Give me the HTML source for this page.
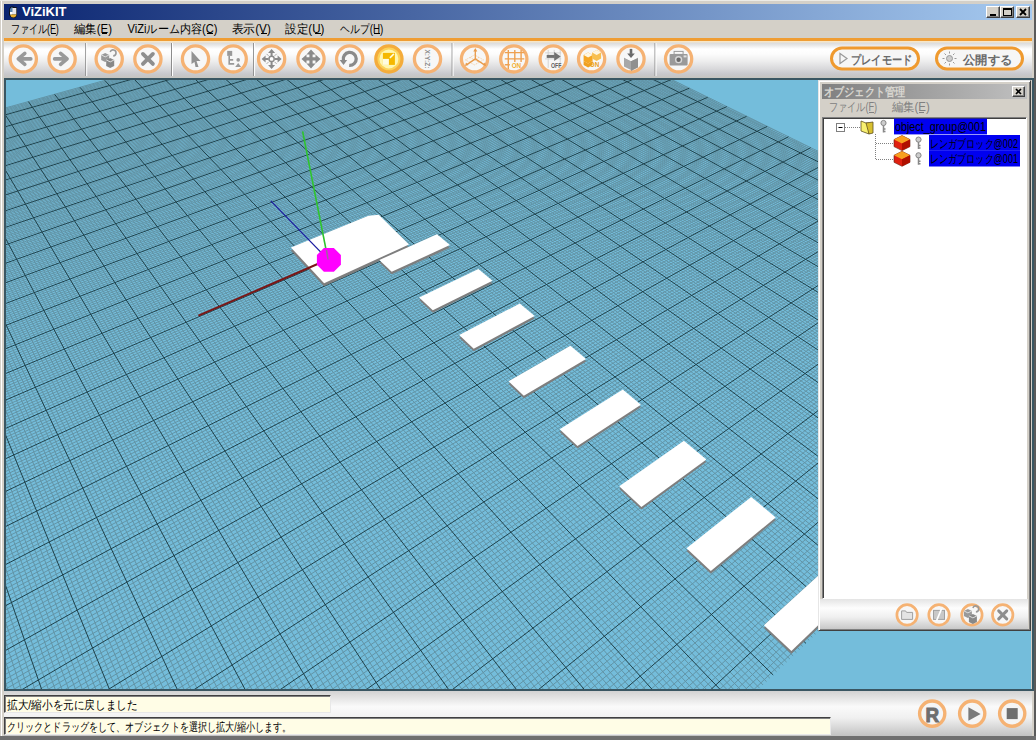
<!DOCTYPE html>
<html><head><meta charset="utf-8"><style>
*{margin:0;padding:0;box-sizing:border-box}
html,body{width:1036px;height:740px;overflow:hidden;background:#d4d0c8;font-family:"Liberation Sans",sans-serif;position:relative}
.a{position:absolute}
svg{font-family:"Liberation Sans",sans-serif}
#title{left:4px;top:4px;width:1028px;height:16px;background:linear-gradient(to right,#0a2470 0%,#a6caf0 100%)}
.wb{top:6px;width:14px;height:12px;background:#d4d0c8;border:1px solid;border-color:#fff #404040 #404040 #fff;box-shadow:inset -1px -1px #808080}
#orange{left:4px;top:38px;width:1028px;height:3px;background:#ef9d34}
#tool{left:4px;top:41px;width:1028px;height:37px;background:linear-gradient(to bottom,#f6e6c8 0px,#f6e6c8 1px,#dcdcdc 2px,#e6e6e6 4px,#ffffff 8px,#fcfcfc 13px,#eeeeee 20px,#d8d8da 28px,#c8c8cc 33px,#c6c4be 37px)}
#vpb{left:4px;top:78px;width:1030px;height:613px;border:2px solid #3a5662}
#status{left:4px;top:691px;width:1028px;height:45px;background:linear-gradient(to bottom,#d2d2d2 0%,#fafafa 35%,#f0f0f0 60%,#c2c2c2 100%)}
.sb{background:#fffde6;border:1px solid;border-color:#404040 #e8e8e8 #e8e8e8 #404040;box-shadow:inset 1px 1px #808080}
#bottom{left:0;top:736px;width:1036px;height:4px;background:#6f6f6f}
#panel{left:818px;top:80px;width:213px;height:551px;background:#d4d0c8;border:1px solid;border-color:#e6e6e6 #404040 #404040 #e6e6e6;box-shadow:inset 1px 1px #fff,inset -1px -1px #808080}
#ptitle{left:822px;top:84px;width:205px;height:15px;background:linear-gradient(to right,#808080,#c0c0c0)}
#tree{left:822px;top:117px;width:205px;height:482px;background:#fff;border:1px solid;border-color:#808080 #fff #fff #808080;box-shadow:inset 1px 1px #404040}
#ptool{left:820px;top:599px;width:208px;height:30px;background:linear-gradient(to bottom,#e4e4e4 0%,#fdfdfd 30%,#f0f0f0 60%,#c8c8c8 100%)}
</style></head>
<body>
<div class="a" style="left:0;top:0;width:1036px;height:1px;background:#ecebe6"></div>
<div class="a" style="left:1px;top:1px;width:1px;height:736px;background:#fff"></div>
<div class="a" style="left:1034px;top:0;width:2px;height:740px;background:#5a5a5a"></div>
<div class="a" id="title"></div>
<svg class="a" style="left:0;top:0" width="80" height="20"><path d="M9.5 8.5Q10 6 12.5 6.5L17 7.5V14.5Q16.5 18 13.5 18Q9.5 17.5 9 14z" fill="#101010"/><path d="M12 8h4.3v6.5h-4.3z" fill="#e8e8ec"/><path d="M10 9q1-2 2.5-2v5h-2.5z" fill="#5a86b0"/><path d="M10 14.5h6.5q-0.5 3-3.2 3-2.8-0.2-3.3-3z" fill="#e8b030"/><path d="M10 12h2v2.5h-2z" fill="#fff"/><text x="22" y="16" textLength="44.5" lengthAdjust="spacingAndGlyphs" font-size="12" fill="#fff" font-weight="bold" >ViZiKIT</text></svg>
<div class="a wb" style="left:986px"><div class="a" style="left:3px;top:7px;width:6px;height:2px;background:#000"></div></div>
<div class="a wb" style="left:1000px"><div class="a" style="left:2px;top:1px;width:9px;height:8px;border:1px solid #000;border-top-width:2px"></div></div>
<div class="a wb" style="left:1016px"><svg class="a" style="left:2px;top:1px" width="9" height="8"><path d="M1 1l6 6M7 1l-6 6" stroke="#000" stroke-width="1.8"/></svg></div>
<svg class="a" style="left:0;top:0" width="1036" height="40"><text x="10.7" y="32.5" textLength="48" lengthAdjust="spacingAndGlyphs" font-size="12" fill="#000" font-weight="normal" >ファイル(F)</text><rect x="51" y="33" width="5" height="1" fill="#000"/><text x="74" y="32.5" textLength="38" lengthAdjust="spacingAndGlyphs" font-size="12" fill="#000" font-weight="normal" >編集(E)</text><rect x="102" y="33" width="5" height="1" fill="#000"/><text x="127.5" y="32.5" textLength="90" lengthAdjust="spacingAndGlyphs" font-size="12" fill="#000" font-weight="normal" >ViZiルーム内容(C)</text><rect x="207" y="33" width="6" height="1" fill="#000"/><text x="231.8" y="32.5" textLength="39" lengthAdjust="spacingAndGlyphs" font-size="12" fill="#000" font-weight="normal" >表示(V)</text><rect x="261" y="33" width="6" height="1" fill="#000"/><text x="285.3" y="32.5" textLength="39" lengthAdjust="spacingAndGlyphs" font-size="12" fill="#000" font-weight="normal" >設定(U)</text><rect x="315" y="33" width="6" height="1" fill="#000"/><text x="340.4" y="32.5" textLength="43" lengthAdjust="spacingAndGlyphs" font-size="12" fill="#000" font-weight="normal" >ヘルプ(H)</text><rect x="374" y="33" width="6" height="1" fill="#000"/></svg>
<div class="a" id="orange"></div>
<div class="a" id="tool"></div>
<svg class="a" style="left:0;top:0" width="1036" height="80"><circle cx="23.3" cy="58.9" r="13.1" fill="#f7f7f7" stroke="#f5b273" stroke-width="3.3"/><path d="M30.8 58.9H20.3M24.8 53.4L18.3 58.9L24.8 64.4" stroke="#999" stroke-width="3.6" fill="none" stroke-linecap="round" stroke-linejoin="round"/><circle cx="62.1" cy="58.9" r="13.1" fill="#f7f7f7" stroke="#f5b273" stroke-width="3.3"/><path d="M54.6 58.9H65.1M60.6 53.4L67.1 58.9L60.6 64.4" stroke="#999" stroke-width="3.6" fill="none" stroke-linecap="round" stroke-linejoin="round"/><circle cx="109.2" cy="58.9" r="13.1" fill="#f7f7f7" stroke="#f5b273" stroke-width="3.3"/><path d="M101.2 54.9l4-2 4 2v5l-4 2-4-2z" fill="#999"/><path d="M101.2 54.9l4 2 4-2" stroke="#ddd" fill="none"/><path d="M106.2 59.9l4-2 4 2v6l-4 2-4-2z" fill="#888"/><path d="M106.2 59.9l4 2 4-2" stroke="#ddd" fill="none"/><path d="M110.2 51.9a3 3 0 1 1 3 4" stroke="#999" stroke-width="1.6" fill="none"/><circle cx="147.9" cy="58.9" r="13.1" fill="#f7f7f7" stroke="#f5b273" stroke-width="3.3"/><path d="M142.9 53.9L152.9 63.9M152.9 53.9L142.9 63.9" stroke="#8e8e8e" stroke-width="3.8" stroke-linecap="round"/><circle cx="195.5" cy="58.9" r="13.1" fill="#f7f7f7" stroke="#f5b273" stroke-width="3.3"/><path d="M191.5 50.9L200.5 60.9L196.5 60.9L198.5 66.9L195.5 66.9L194.5 61.9L191.5 63.9z" fill="#929292"/><circle cx="233.2" cy="58.9" r="13.1" fill="#f7f7f7" stroke="#f5b273" stroke-width="3.3"/><path d="M227.2 50.9h5v5h-5z" fill="#999"/><path d="M229.2 55.9v8h5M229.2 59.9h4" stroke="#999" stroke-width="1.6" fill="none"/><circle cx="238.2" cy="59.9" r="1.8" fill="#999"/><path d="M238.2 62.9l3 4h-6z" fill="#999"/><circle cx="271.6" cy="58.9" r="13.1" fill="#f7f7f7" stroke="#f5b273" stroke-width="3.3"/><path d="M263.6 58.9H268.6M274.6 58.9H279.6M271.6 50.9V55.9M271.6 61.9V66.9" stroke="#8a8a8a" stroke-width="2"/><circle cx="271.6" cy="58.9" r="2.6" fill="#fff" stroke="#8a8a8a" stroke-width="1.4"/><path d="M261.6 58.9l4-3.5v7zM281.6 58.9l-4-3.5v7zM271.6 48.9l-3.5 4h7zM271.6 68.9l-3.5-4h7z" fill="#8a8a8a"/><path d="M266.6 53.9l2 2M276.6 53.9l-2 2M266.6 63.9l2-2M276.6 63.9l-2-2" stroke="#aaa" stroke-width="1"/><circle cx="311" cy="58.9" r="13.1" fill="#f7f7f7" stroke="#f5b273" stroke-width="3.3"/><path d="M305 58.9H317M311 52.9V64.9" stroke="#8a8a8a" stroke-width="3.2"/><path d="M301.5 58.9l5-4.5v9zM320.5 58.9l-5-4.5v9zM311 49.4l-4.5 5h9zM311 68.4l-4.5-5h9z" fill="#8a8a8a"/><circle cx="349.7" cy="58.9" r="13.1" fill="#f7f7f7" stroke="#f5b273" stroke-width="3.3"/><path d="M343.4 60.4A6.5 6.5 0 1 1 349.2 65.4" stroke="#8a8a8a" stroke-width="3.3" fill="none"/><path d="M339.7 59.9h7.5l-3.7 5z" fill="#8a8a8a"/><circle cx="388.9" cy="58.9" r="13.1" fill="#fbd35a" stroke="#f4ac3c" stroke-width="3.3"/><circle cx="388.9" cy="58.9" r="9.5" fill="#fff6b0"/><rect x="382.9" y="52.9" width="12" height="12" fill="#f5b800"/><rect x="382.9" y="58.9" width="6" height="6" fill="#fffce0"/><path d="M389.9 57.9l4-4" stroke="#fffce0" stroke-width="1.5"/><circle cx="427.5" cy="58.9" r="13.1" fill="#f7f7f7" stroke="#f5b273" stroke-width="3.3"/><g transform="translate(425.3 58.9) rotate(90)"><text x="0" y="0" font-size="6.5" font-weight="bold" fill="#8a8a8a" text-anchor="middle" textLength="19" lengthAdjust="spacingAndGlyphs">X:Y:Z:</text></g><circle cx="474.5" cy="58.9" r="13.1" fill="#f7f7f7" stroke="#f5b273" stroke-width="3.3"/><path d="M465.5 59.9l9-5 9 5-9 5z M470.0 57.4l9 5M479.0 57.4l-9 5" stroke="#f4c898" stroke-width="0.8" fill="none" stroke-dasharray="1.2 0.8"/><path d="M475.3 58.9V49.9M475.3 58.9L466.5 64.9M475.3 58.9L484.5 64.9" stroke="#e89a4a" stroke-width="1.3" fill="none"/><path d="M475.3 47.9l-2 3.5h4z M465.0 65.9l1-3.5 2.5 2.5z M486.0 65.9l-1-3.5-2.5 2.5z" fill="#e89a4a"/><circle cx="513.8" cy="58.9" r="13.1" fill="#f7f7f7" stroke="#f5b273" stroke-width="3.3"/><path d="M504.79999999999995 52.6h19.5M504.79999999999995 58.9h19.5M504.79999999999995 64.7h5M508.29999999999995 49.9v19M514.8 49.9v12M521.0999999999999 49.9v12" stroke="#eea050" stroke-width="1.4"/><text x="516.4" y="67.9" font-size="7" font-weight="bold" fill="#f2b030" text-anchor="middle" textLength="9.5" lengthAdjust="spacingAndGlyphs">ON</text><circle cx="553.2" cy="58.9" r="13.1" fill="#f7f7f7" stroke="#f5b273" stroke-width="3.3"/><path d="M545.2 52.9h16M545.2 58.9h16M548.2 49.9v18M554.2 49.9v9M560.2 49.9v18" stroke="#cfcfcf" stroke-width="0.9"/><path d="M546.7 56.4h8" stroke="#707070" stroke-width="3"/><path d="M554.2 51.9l6.5 4.5-6.5 4.5z" fill="#707070"/><text x="556.2" y="67.9" font-size="7" font-weight="bold" fill="#606060" text-anchor="middle" textLength="10.5" lengthAdjust="spacingAndGlyphs">OFF</text><circle cx="591.6" cy="58.9" r="13.1" fill="#f7f7f7" stroke="#f5b273" stroke-width="3.3"/><path d="M583.6 54.9l4.5-2.5 4.5 2.5v6l-4.5 2.5-4.5-2.5z" fill="#f5a623"/><path d="M583.6 54.9l4.5 2.5 4.5-2.5-4.5-2.5z" fill="#fff6e0"/><path d="M592.1 52.4l4.5-2.5 4.5 2.5v6l-4.5 2.5-4.5-2.5z" fill="#f8c050"/><path d="M592.1 52.4l4.5 2.5 4.5-2.5-4.5-2.5z" fill="#fff6e0"/><path d="M583.6 60.9l4.5 2.5 4.5-2.5v4l-4.5 2.5-4.5-2.5z" fill="#f0a020"/><text x="594.6" y="67.4" font-size="7" font-weight="bold" fill="#eaa020" text-anchor="middle" textLength="9.5" lengthAdjust="spacingAndGlyphs">ON</text><circle cx="631" cy="58.9" r="13.1" fill="#f7f7f7" stroke="#f5b273" stroke-width="3.3"/><path d="M624 57.4l7 3.5 7-3.5v9l-7 3.5-7-3.5z" fill="#a8a8a8"/><path d="M631 60.9v10l7-3.5v-9z" fill="#909090"/><path d="M624 57.4l7 3.5 7-3.5-7-3.5z" fill="#fafafa"/><path d="M631 48.9v5" stroke="#6a6a6a" stroke-width="2.6"/><path d="M627.2 53.4h7.6l-3.8 4.5z" fill="#6a6a6a"/><circle cx="678.6" cy="58.9" r="13.1" fill="#f7f7f7" stroke="#f5b273" stroke-width="3.3"/><rect x="669.6" y="53.9" width="18" height="11.5" rx="1" fill="#9a9a9a"/><rect x="674.1" y="51.4" width="9" height="3" fill="none" stroke="#9a9a9a" stroke-width="1"/><rect x="683.6" y="55.4" width="3" height="2" fill="#e0e0e0"/><circle cx="678.6" cy="59.699999999999996" r="3.6" fill="#d8d8d8"/><circle cx="678.6" cy="59.699999999999996" r="2.2" fill="#6a6a6a"/><rect x="85.2" y="43" width="1" height="33" fill="#8c8c8c"/><rect x="86.2" y="43" width="1" height="33" fill="#fff"/><rect x="171.0" y="43" width="1" height="33" fill="#8c8c8c"/><rect x="172.0" y="43" width="1" height="33" fill="#fff"/><rect x="253.1" y="43" width="1" height="33" fill="#8c8c8c"/><rect x="254.1" y="43" width="1" height="33" fill="#fff"/><rect x="451.6" y="43" width="1" height="33" fill="#8c8c8c"/><rect x="452.6" y="43" width="1" height="33" fill="#fff"/><rect x="654.5" y="43" width="1" height="33" fill="#8c8c8c"/><rect x="655.5" y="43" width="1" height="33" fill="#fff"/><rect x="831.5" y="48" width="87" height="21" rx="10.5" fill="#f6f6f6" stroke="#ef9a2f" stroke-width="3"/><path d="M840 53.5l7 5-7 5z" fill="none" stroke="#999" stroke-width="1.2"/><text x="851" y="63.5" textLength="61" lengthAdjust="spacingAndGlyphs" font-size="12" font-weight="bold" fill="#6a6a6a">プレイモード</text><rect x="936.5" y="48" width="86" height="21" rx="10.5" fill="#f6f6f6" stroke="#ef9a2f" stroke-width="3"/><circle cx="949.5" cy="58.5" r="3" fill="#ccc" stroke="#999"/><path d="M949.5 51.5v2M949.5 63.5v2M942.5 58.5h2M954.5 58.5h2M944.5 53.5l1.5 1.5M953 62l1.5 1.5M954.5 53.5L953 55M946 62l-1.5 1.5" stroke="#999" stroke-width="1"/><text x="963" y="63.5" textLength="49" lengthAdjust="spacingAndGlyphs" font-size="12" font-weight="bold" fill="#6a6a6a">公開する</text></svg>
<div class="a" id="vpb"></div>
<svg class="vp" width="1036" height="740" viewBox="0 0 1036 740">
<defs><clipPath id="c"><rect x="6" y="80" width="1025" height="609"/></clipPath></defs>
<g clip-path="url(#c)">
<rect x="0" y="0" width="1036" height="740" fill="#74bddb"/>
<path d="M-336.1 202.8L-320.2 1731.1M-332.3 201.7L-307.3 1718.6M-328.5 200.7L-294.5 1706.2M-324.8 199.6L-281.8 1694M-321.1 198.6L-269.3 1681.9M-313.6 196.5L-244.8 1658.2M-309.9 195.5L-232.7 1646.5M-306.2 194.5L-220.7 1635M-302.5 193.5L-208.9 1623.6M-298.9 192.4L-197.2 1612.3M-295.2 191.4L-185.7 1601.1M-291.6 190.4L-174.2 1590.1M-287.9 189.4L-162.9 1579.2M-284.3 188.4L-151.8 1568.4M-277.1 186.4L-129.7 1547.1M-273.5 185.4L-118.9 1536.7M-270 184.4L-108.2 1526.3M-266.4 183.4L-97.6 1516.1M-262.9 182.5L-87.1 1505.9M-259.3 181.5L-76.7 1495.9M-255.8 180.5L-66.5 1486M-252.3 179.5L-56.3 1476.2M-248.8 178.5L-46.2 1466.4M-241.8 176.6L-26.4 1447.3M-238.4 175.7L-16.6 1437.9M-234.9 174.7L-7 1428.5M-231.5 173.7L2.6 1419.3M-228 172.8L12.1 1410.2M-224.6 171.8L21.4 1401.1M-221.2 170.9L30.7 1392.1M-217.8 169.9L39.9 1383.3M-214.4 169L49 1374.5M-207.7 167.1L67 1357.1M-204.3 166.2L75.8 1348.6M-200.9 165.3L84.6 1340.1M-197.6 164.3L93.2 1331.8M-194.3 163.4L101.8 1323.5M-191 162.5L110.3 1315.2M-187.7 161.6L118.8 1307.1M-184.4 160.7L127.1 1299M-181.1 159.7L135.4 1291M-174.5 157.9L151.7 1275.3M-171.3 157L159.8 1267.5M-168 156.1L167.8 1259.8M-164.8 155.2L175.7 1252.2M-161.6 154.3L183.5 1244.6M-158.4 153.4L191.2 1237.1M-155.2 152.6L198.9 1229.7M-152 151.7L206.6 1222.3M-148.8 150.8L214.1 1215M-142.5 149L229 1200.6M-139.3 148.1L236.4 1193.5M-136.2 147.3L243.7 1186.5M-133 146.4L250.9 1179.5M-129.9 145.5L258.1 1172.6M-126.8 144.7L265.2 1165.7M-123.7 143.8L272.2 1158.9M-120.6 143L279.2 1152.2M-117.5 142.1L286.1 1145.5M-111.3 140.4L299.8 1132.3M-108.3 139.5L306.6 1125.7M-105.2 138.7L313.2 1119.3M-102.2 137.8L319.9 1112.9M-99.2 137L326.5 1106.5M-96.1 136.2L333 1100.2M-93.1 135.3L339.5 1094M-90.1 134.5L345.9 1087.8M-87.1 133.7L352.3 1081.6M-81.2 132L364.9 1069.4M-78.2 131.2L371.1 1063.4M-75.2 130.4L377.2 1057.5M-72.3 129.5L383.4 1051.6M-69.3 128.7L389.4 1045.7M-66.4 127.9L395.4 1039.9M-63.5 127.1L401.4 1034.1M-60.6 126.3L407.3 1028.4M-57.7 125.5L413.2 1022.7M-51.9 123.9L424.8 1011.5M-49 123.1L430.6 1006M-46.1 122.3L436.3 1000.5M-43.3 121.5L441.9 995M-40.4 120.7L447.5 989.6M-37.6 119.9L453.1 984.2M-34.7 119.1L458.6 978.9M-31.9 118.3L464.1 973.6M-29.1 117.5L469.6 968.3M-23.4 116L480.3 957.9M-20.6 115.2L485.7 952.8M-17.8 114.4L490.9 947.7M-15.1 113.7L496.2 942.6M-12.3 112.9L501.4 937.6M-9.5 112.1L506.6 932.6M-6.8 111.4L511.7 927.6M-4 110.6L516.8 922.7M-1.3 109.8L521.8 917.8M4.2 108.3L531.8 908.2M6.9 107.6L536.8 903.4M9.6 106.8L541.7 898.7M12.3 106.1L546.6 894M15 105.3L551.4 889.3M17.7 104.6L556.2 884.6M20.4 103.8L561 880M23.1 103.1L565.7 875.5M25.7 102.3L570.4 870.9M31 100.9L579.7 861.9M33.7 100.1L584.3 857.5M36.3 99.4L588.9 853.1M38.9 98.7L593.5 848.7M41.6 97.9L598 844.3M44.2 97.2L602.5 840M46.8 96.5L606.9 835.7M49.4 95.8L611.3 831.4M52 95L615.7 827.2M57.1 93.6L624.4 818.8M59.7 92.9L628.7 814.6M62.3 92.2L633 810.5M64.8 91.5L637.2 806.4M67.4 90.8L641.4 802.3M69.9 90.1L645.6 798.3M72.5 89.4L649.8 794.3M75 88.7L653.9 790.3M77.5 88L658 786.3M82.5 86.6L666.2 778.4M85 85.9L670.2 774.5M87.5 85.2L674.2 770.7M90 84.5L678.2 766.8M92.5 83.8L682.1 763M95 83.1L686.1 759.2M97.4 82.4L690 755.5M99.9 81.7L693.8 751.7M102.3 81.1L697.7 748M107.2 79.7L705.3 740.6M109.7 79L709.1 737M112.1 78.4L712.8 733.4M114.5 77.7L716.6 729.8M116.9 77L720.3 726.2M119.3 76.3L724 722.6M121.7 75.7L727.6 719.1M124.1 75L731.3 715.6M126.5 74.4L734.9 712.1M131.3 73L742.1 705.2M133.6 72.4L745.6 701.7M136 71.7L749.1 698.3M138.3 71.1L752.6 694.9M140.7 70.4L756.1 691.6M143 69.8L759.6 688.2M145.4 69.1L763 684.9M147.7 68.5L766.5 681.6M150 67.8L769.9 678.3M154.7 66.5L776.6 671.8M157 65.9L780 668.5M159.3 65.3L783.3 665.3M161.6 64.6L786.6 662.1M163.9 64L789.9 659M166.1 63.4L793.1 655.8M168.4 62.7L796.4 652.7M170.7 62.1L799.6 649.6M172.9 61.5L802.8 646.5M177.5 60.2L809.2 640.3M179.7 59.6L812.3 637.3M181.9 59L815.5 634.2M184.2 58.3L818.6 631.2M186.4 57.7L821.7 628.2M188.6 57.1L824.8 625.3M190.9 56.5L827.8 622.3M193.1 55.9L830.9 619.4M195.3 55.3L833.9 616.4M199.7 54L839.9 610.6M201.9 53.4L842.9 607.8M204 52.8L845.9 604.9M206.2 52.2L848.8 602M208.4 51.6L851.7 599.2M210.6 51L854.7 596.4M212.7 50.4L857.6 593.6M214.9 49.8L860.4 590.8M217 49.2L863.3 588M221.3 48L869 582.6M223.5 47.4L871.8 579.8M225.6 46.8L874.6 577.1M227.7 46.3L877.4 574.4M229.8 45.7L880.2 571.7M231.9 45.1L882.9 569.1M234 44.5L885.7 566.4M236.1 43.9L888.4 563.8M238.2 43.3L891.1 561.2M242.4 42.2L896.5 556M244.5 41.6L899.2 553.4M246.6 41L901.9 550.8M248.6 40.4L904.5 548.3M250.7 39.9L907.1 545.7M252.8 39.3L909.7 543.2M254.8 38.7L912.4 540.7M256.9 38.2L914.9 538.2M258.9 37.6L917.5 535.7M263 36.5L922.6 530.8M265 35.9L925.2 528.3M267.1 35.3L927.7 525.9M269.1 34.8L930.2 523.4M271.1 34.2L932.7 521M273.1 33.7L935.2 518.6M275.1 33.1L937.7 516.2M277.1 32.5L940.1 513.9M279.1 32L942.6 511.5M283.1 30.9L947.4 506.8M285.1 30.3L949.8 504.5M287 29.8L952.2 502.2M289 29.2L954.6 499.9M291 28.7L957 497.6M292.9 28.1L959.4 495.3M294.9 27.6L961.7 493M296.8 27.1L964 490.8M298.8 26.5L966.4 488.5M302.7 25.4L971 484M304.6 24.9L973.3 481.8M306.5 24.4L975.6 479.6M308.5 23.8L977.8 477.4M310.4 23.3L980.1 475.3M312.3 22.8L982.4 473.1M314.2 22.2L984.6 470.9M316.1 21.7L986.8 468.8M318 21.2L989 466.6M321.8 20.1L993.4 462.4M323.7 19.6L995.6 460.3M325.6 19.1L997.8 458.2M327.5 18.6L1000 456.1M329.3 18L1002.1 454M331.2 17.5L1004.3 451.9M333.1 17L1006.4 449.9M334.9 16.5L1008.5 447.8M336.8 16L1010.6 445.8M340.5 14.9L1014.8 441.7M342.3 14.4L1016.9 439.7M344.2 13.9L1019 437.7M346 13.4L1021.1 435.7M347.8 12.9L1023.1 433.7M349.7 12.4L1025.2 431.7M351.5 11.9L1027.2 429.8M353.3 11.4L1029.2 427.8M355.1 10.9L1031.2 425.9M358.7 9.9L1035.2 422M360.5 9.4L1037.2 420.1M362.3 8.9L1039.2 418.2M364.1 8.4L1041.2 416.3M365.9 7.9L1043.1 414.4M367.7 7.4L1045.1 412.5M369.5 6.9L1047 410.6M371.2 6.4L1049 408.7M373 5.9L1050.9 406.9M376.5 4.9L1054.7 403.2M378.3 4.4L1056.6 401.3M380.1 4L1058.5 399.5M381.8 3.5L1060.4 397.7M383.6 3L1062.3 395.9M385.3 2.5L1064.2 394.1M387 2L1066 392.3M388.8 1.5L1067.9 390.5M390.5 1.1L1069.7 388.7M394 0.1L1073.4 385.2M395.7 -0.4L1075.2 383.4M397.4 -0.9L1077 381.6M399.1 -1.3L1078.8 379.9M400.8 -1.8L1080.6 378.2M402.5 -2.3L1082.4 376.4M404.2 -2.7L1084.2 374.7M405.9 -3.2L1086 373M407.6 -3.7L1087.7 371.3M411 -4.6L1091.2 367.9M412.7 -5.1L1093 366.2M414.3 -5.6L1094.7 364.6M416 -6L1096.4 362.9M417.7 -6.5L1098.2 361.2M419.4 -7L1099.9 359.6M421 -7.4L1101.6 357.9M422.7 -7.9L1103.3 356.3M424.3 -8.3L1105 354.7M427.6 -9.2L1108.3 351.4M429.3 -9.7L1110 349.8M430.9 -10.2L1111.7 348.2M432.6 -10.6L1113.3 346.6M434.2 -11.1L1115 345M435.8 -11.5L1116.6 343.4M437.4 -12L1118.3 341.8M439.1 -12.4L1119.9 340.3M440.7 -12.9L1121.5 338.7M443.9 -13.8L1124.7 335.6M445.5 -14.2L1126.3 334M447.1 -14.7L1127.9 332.5M448.7 -15.1L1129.5 330.9M450.3 -15.5L1131.1 329.4M451.9 -16L1132.7 327.9M453.5 -16.4L1134.3 326.4M455.1 -16.9L1135.8 324.9M456.7 -17.3L1137.4 323.4M459.8 -18.2L1140.5 320.4M461.4 -18.6L1142 318.9M463 -19.1L1143.5 317.4M464.6 -19.5L1145.1 315.9M466.1 -19.9L1146.6 314.5M467.7 -20.4L1148.1 313M-338 203.3L467.7 -20.4M-338 204.6L468.8 -19.8M-338 206L469.9 -19.3M-338 207.3L471 -18.7M-337.9 208.7L472.2 -18.2M-337.9 210L473.3 -17.6M-337.9 212.8L475.6 -16.5M-337.9 214.2L476.7 -15.9M-337.9 215.5L477.8 -15.4M-337.9 216.9L479 -14.8M-337.9 218.3L480.1 -14.3M-337.9 219.7L481.3 -13.7M-337.8 221.1L482.4 -13.1M-337.8 222.5L483.6 -12.6M-337.8 224L484.8 -12M-337.8 226.8L487.1 -10.9M-337.8 228.3L488.3 -10.3M-337.8 229.7L489.4 -9.7M-337.8 231.2L490.6 -9.1M-337.8 232.6L491.8 -8.5M-337.8 234.1L493 -8M-337.7 235.6L494.2 -7.4M-337.7 237L495.4 -6.8M-337.7 238.5L496.6 -6.2M-337.7 241.5L499 -5M-337.7 243L500.2 -4.4M-337.7 244.5L501.4 -3.9M-337.7 246L502.6 -3.3M-337.7 247.6L503.8 -2.7M-337.6 249.1L505 -2.1M-337.6 250.6L506.2 -1.5M-337.6 252.2L507.5 -0.9M-337.6 253.8L508.7 -0.3M-337.6 256.9L511.2 0.9M-337.6 258.5L512.4 1.6M-337.6 260L513.7 2.2M-337.6 261.6L514.9 2.8M-337.5 263.2L516.2 3.4M-337.5 264.8L517.4 4M-337.5 266.5L518.7 4.6M-337.5 268.1L519.9 5.2M-337.5 269.7L521.2 5.9M-337.5 273L523.7 7.1M-337.5 274.6L525 7.7M-337.4 276.3L526.3 8.4M-337.4 278L527.6 9M-337.4 279.6L528.9 9.6M-337.4 281.3L530.2 10.2M-337.4 283L531.5 10.9M-337.4 284.7L532.8 11.5M-337.4 286.4L534.1 12.2M-337.3 289.9L536.7 13.4M-337.3 291.6L538 14.1M-337.3 293.4L539.3 14.7M-337.3 295.1L540.6 15.4M-337.3 296.9L542 16M-337.3 298.6L543.3 16.7M-337.3 300.4L544.6 17.3M-337.3 302.2L546 18M-337.2 304L547.3 18.7M-337.2 307.6L550 20M-337.2 309.4L551.4 20.6M-337.2 311.3L552.7 21.3M-337.2 313.1L554.1 22M-337.2 315L555.5 22.6M-337.1 316.8L556.8 23.3M-337.1 318.7L558.2 24M-337.1 320.6L559.6 24.7M-337.1 322.5L561 25.3M-337.1 326.3L563.8 26.7M-337.1 328.2L565.2 27.4M-337.1 330.1L566.6 28.1M-337 332.1L568 28.8M-337 334L569.4 29.5M-337 336L570.8 30.2M-337 337.9L572.2 30.9M-337 339.9L573.6 31.6M-337 341.9L575.1 32.3M-336.9 345.9L577.9 33.7M-336.9 347.9L579.4 34.4M-336.9 350L580.8 35.1M-336.9 352L582.3 35.8M-336.9 354.1L583.7 36.5M-336.9 356.1L585.2 37.2M-336.8 358.2L586.7 37.9M-336.8 360.3L588.1 38.7M-336.8 362.4L589.6 39.4M-336.8 366.6L592.6 40.8M-336.8 368.8L594.1 41.6M-336.8 370.9L595.6 42.3M-336.7 373.1L597.1 43M-336.7 375.2L598.6 43.8M-336.7 377.4L600.1 44.5M-336.7 379.6L601.6 45.2M-336.7 381.8L603.1 46M-336.7 384L604.6 46.7M-336.6 388.5L607.7 48.2M-336.6 390.7L609.2 49M-336.6 393L610.8 49.7M-336.6 395.3L612.3 50.5M-336.6 397.6L613.9 51.3M-336.5 399.9L615.4 52M-336.5 402.2L617 52.8M-336.5 404.5L618.5 53.5M-336.5 406.9L620.1 54.3M-336.5 411.6L623.3 55.9M-336.4 414L624.9 56.6M-336.4 416.4L626.5 57.4M-336.4 418.8L628.1 58.2M-336.4 421.2L629.7 59M-336.4 423.7L631.3 59.8M-336.3 426.1L632.9 60.6M-336.3 428.6L634.5 61.4M-336.3 431.1L636.1 62.2M-336.3 436.1L639.4 63.8M-336.3 438.6L641 64.6M-336.2 441.1L642.7 65.4M-336.2 443.7L644.3 66.2M-336.2 446.3L646 67M-336.2 448.9L647.7 67.8M-336.2 451.5L649.3 68.6M-336.1 454.1L651 69.4M-336.1 456.7L652.7 70.3M-336.1 462L656.1 71.9M-336.1 464.7L657.8 72.8M-336 467.4L659.5 73.6M-336 470.1L661.2 74.4M-336 472.9L662.9 75.3M-336 475.6L664.6 76.1M-336 478.4L666.3 77M-335.9 481.2L668.1 77.8M-335.9 484L669.8 78.7M-335.9 489.6L673.3 80.4M-335.9 492.5L675.1 81.2M-335.8 495.4L676.8 82.1M-335.8 498.3L678.6 83M-335.8 501.2L680.4 83.8M-335.8 504.1L682.1 84.7M-335.8 507.1L683.9 85.6M-335.7 510L685.7 86.5M-335.7 513L687.5 87.3M-335.7 519L691.1 89.1M-335.6 522.1L693 90M-335.6 525.1L694.8 90.9M-335.6 528.2L696.6 91.8M-335.6 531.3L698.5 92.7M-335.6 534.5L700.3 93.6M-335.5 537.6L702.2 94.5M-335.5 540.8L704 95.4M-335.5 544L705.9 96.3M-335.4 550.4L709.6 98.2M-335.4 553.6L711.5 99.1M-335.4 556.9L713.4 100M-335.4 560.2L715.3 101M-335.3 563.5L717.2 101.9M-335.3 566.9L719.1 102.8M-335.3 570.2L721 103.8M-335.3 573.6L723 104.7M-335.2 577L724.9 105.7M-335.2 583.9L728.8 107.6M-335.2 587.4L730.7 108.5M-335.1 590.9L732.7 109.5M-335.1 594.4L734.7 110.4M-335.1 598L736.6 111.4M-335.1 601.6L738.6 112.4M-335 605.2L740.6 113.4M-335 608.8L742.6 114.3M-335 612.5L744.6 115.3M-334.9 619.9L748.6 117.3M-334.9 623.6L750.7 118.3M-334.9 627.4L752.7 119.3M-334.8 631.1L754.8 120.3M-334.8 635L756.8 121.3M-334.8 638.8L758.9 122.3M-334.8 642.7L760.9 123.3M-334.7 646.6L763 124.3M-334.7 650.5L765.1 125.3M-334.6 658.5L769.3 127.4M-334.6 662.5L771.4 128.4M-334.6 666.5L773.5 129.5M-334.6 670.6L775.6 130.5M-334.5 674.7L777.7 131.5M-334.5 678.9L779.9 132.6M-334.5 683L782 133.6M-334.4 687.3L784.2 134.7M-334.4 691.5L786.3 135.8M-334.3 700.1L790.7 137.9M-334.3 704.4L792.9 139M-334.3 708.8L795.1 140M-334.2 713.2L797.3 141.1M-334.2 717.6L799.5 142.2M-334.2 722.1L801.7 143.3M-334.2 726.6L803.9 144.4M-334.1 731.2L806.2 145.5M-334.1 735.7L808.4 146.6M-334 745L812.9 148.8M-334 749.7L815.2 149.9M-333.9 754.4L817.5 151M-333.9 759.2L819.8 152.1M-333.9 764L822.1 153.3M-333.8 768.9L824.4 154.4M-333.8 773.8L826.7 155.5M-333.8 778.7L829 156.7M-333.7 783.7L831.4 157.8M-333.7 793.7L836.1 160.1M-333.6 798.8L838.4 161.3M-333.6 804L840.8 162.4M-333.5 809.1L843.2 163.6M-333.5 814.4L845.6 164.8M-333.5 819.6L848 166M-333.4 825L850.4 167.2M-333.4 830.3L852.8 168.3M-333.4 835.7L855.3 169.5M-333.3 846.7L860.2 171.9M-333.2 852.3L862.6 173.1M-333.2 857.9L865.1 174.3M-333.1 863.5L867.6 175.6M-333.1 869.2L870.1 176.8M-333.1 875L872.6 178M-333 880.8L875.1 179.2M-333 886.6L877.6 180.5M-332.9 892.5L880.2 181.7M-332.8 904.5L885.3 184.2M-332.8 910.6L887.8 185.5M-332.8 916.7L890.4 186.7M-332.7 922.9L893 188M-332.7 929.2L895.6 189.3M-332.6 935.5L898.2 190.6M-332.6 941.8L900.8 191.9M-332.5 948.2L903.5 193.1M-332.5 954.7L906.1 194.4M-332.4 967.9L911.4 197M-332.3 974.6L914.1 198.4M-332.3 981.3L916.8 199.7M-332.2 988.1L919.5 201M-332.2 995L922.2 202.3M-332.1 1001.9L924.9 203.7M-332.1 1008.9L927.7 205M-332 1016L930.4 206.3M-332 1023.1L933.2 207.7M-331.9 1037.6L938.7 210.4M-331.8 1045L941.5 211.8M-331.8 1052.4L944.3 213.2M-331.7 1059.9L947.2 214.5M-331.7 1067.5L950 215.9M-331.6 1075.2L952.8 217.3M-331.5 1082.9L955.7 218.7M-331.5 1090.8L958.6 220.1M-331.4 1098.7L961.5 221.6M-331.3 1114.8L967.3 224.4M-331.2 1122.9L970.2 225.8M-331.2 1131.2L973.1 227.3M-331.1 1139.5L976.1 228.7M-331.1 1148L979 230.2M-331 1156.5L982 231.6M-330.9 1165.1L985 233.1M-330.9 1173.8L988 234.6M-330.8 1182.6L991 236M-330.7 1200.5L997.1 239M-330.6 1209.7L1000.1 240.5M-330.5 1218.9L1003.2 242M-330.5 1228.2L1006.3 243.5M-330.4 1237.6L1009.4 245M-330.3 1247.1L1012.5 246.6M-330.3 1256.8L1015.6 248.1M-330.2 1266.5L1018.8 249.6M-330.1 1276.4L1021.9 251.2M-330 1296.5L1028.3 254.3M-329.9 1306.7L1031.5 255.9M-329.8 1317.1L1034.7 257.4M-329.8 1327.5L1037.9 259M-329.7 1338.1L1041.2 260.6M-329.6 1348.9L1044.4 262.2M-329.5 1359.7L1047.7 263.8M-329.4 1370.7L1051 265.4M-329.4 1381.9L1054.3 267.1M-329.2 1404.6L1061 270.3M-329.1 1416.1L1064.3 272M-329 1427.8L1067.7 273.6M-328.9 1439.7L1071.1 275.3M-328.8 1451.7L1074.5 276.9M-328.8 1463.9L1077.9 278.6M-328.7 1476.2L1081.4 280.3M-328.6 1488.7L1084.8 282M-328.5 1501.3L1088.3 283.7M-328.3 1527.1L1095.3 287.1M-328.2 1540.3L1098.8 288.8M-328.1 1553.7L1102.4 290.6M-328 1567.2L1105.9 292.3M-327.9 1580.9L1109.5 294.1M-327.8 1594.8L1113.1 295.8M-327.7 1609L1116.7 297.6M-327.6 1623.3L1120.3 299.4M-327.5 1637.8L1124 301.2M-327.3 1667.4L1131.3 304.8M-327.2 1682.6L1135 306.6M-327 1698L1138.7 308.4M-326.9 1713.5L1142.5 310.2M-326.8 1729.4L1146.2 312.1" stroke="#6294a6" stroke-width="1" fill="none"/>
<path d="M-317.3 197.6L-257 1670M-280.7 187.4L-140.7 1557.7M-245.3 177.6L-36.3 1456.8M-211 168.1L58 1365.8M-177.8 158.8L143.6 1283.1M-145.6 149.9L221.6 1207.8M-114.4 141.2L293 1138.8M-84.1 132.8L358.6 1075.5M-54.8 124.7L419.1 1017.1M-26.2 116.8L475 963.1M1.5 109.1L526.8 913M28.4 101.6L575.1 866.4M54.6 94.3L620.1 823M80 87.3L662.1 782.4M104.8 80.4L701.5 744.3M128.9 73.7L738.5 708.6M152.4 67.2L773.2 675M175.2 60.8L806 643.4M197.5 54.7L836.9 613.5M219.2 48.6L866.2 585.3M240.3 42.8L893.8 558.6M261 37L920.1 533.2M281.1 31.4L945 509.2M300.7 26L968.7 486.3M319.9 20.7L991.2 464.5M338.6 15.5L1012.7 443.7M356.9 10.4L1033.2 423.9M374.8 5.4L1052.8 405M392.2 0.6L1071.6 386.9M409.3 -4.2L1089.5 369.6M426 -8.8L1106.7 353M442.3 -13.3L1123.1 337.1M458.3 -17.8L1138.9 321.9M-337.9 211.4L474.4 -17.1M-337.8 225.4L485.9 -11.4M-337.7 240L497.8 -5.6M-337.6 255.3L509.9 0.3M-337.5 271.3L522.5 6.5M-337.4 288.2L535.4 12.8M-337.2 305.8L548.7 19.3M-337.1 324.4L562.4 26M-337 343.9L576.5 33M-336.8 364.5L591.1 40.1M-336.6 386.2L606.1 47.5M-336.5 409.2L621.7 55.1M-336.3 433.6L637.8 63M-336.1 459.4L654.4 71.1M-335.9 486.8L671.5 79.5M-335.7 516L689.3 88.2M-335.5 547.2L707.7 97.3M-335.2 580.5L726.8 106.6M-335 616.1L746.6 116.3M-334.7 654.5L767.2 126.4M-334.4 695.8L788.5 136.8M-334 740.4L810.7 147.7M-333.7 788.7L833.7 159M-333.3 841.2L857.7 170.7M-332.9 898.5L882.7 183M-332.4 961.3L908.8 195.7M-331.9 1030.3L936 209.1M-331.4 1106.7L964.4 223M-330.7 1191.5L994 237.5M-330.1 1286.4L1025.1 252.7M-329.3 1393.1L1057.7 268.7M-328.4 1514.1L1091.8 285.4M-327.4 1652.5L1127.6 303" stroke="#1f4049" stroke-width="1" fill="none"/>
<polygon points="290.9,250.4 368.4,218.7 378.8,217.8 409,247.5 324.1,286.2" fill="#7e7e7e"/><polygon points="290.9,247.4 368.4,215.7 378.8,214.8 409,244.5 324.1,283.2" fill="#fff"/><polygon points="379.3,262.6 437,236.9 449.9,247.7 391.7,274.3" fill="#7e7e7e"/><polygon points="379.3,260 437,234.3 449.9,245.1 391.7,271.7" fill="#fff"/><polygon points="419.1,300 478.4,271.5 492.5,283.3 432.8,312.8" fill="#7e7e7e"/><polygon points="419.1,297.4 478.4,268.9 492.5,280.7 432.8,310.2" fill="#fff"/><polygon points="459.2,337.7 519.8,306.1 534.7,318.6 473.7,351.3" fill="#7e7e7e"/><polygon points="459.2,335.1 519.8,303.5 534.7,316 473.7,348.7" fill="#fff"/><polygon points="508.5,383.9 570.4,348.4 586.1,361.6 523.8,398.3" fill="#7e7e7e"/><polygon points="508.5,381.3 570.4,345.8 586.1,359 523.8,395.7" fill="#fff"/><polygon points="559.7,431.9 622.8,392.2 640.9,407.3 577.5,448.6" fill="#7e7e7e"/><polygon points="559.7,429.3 622.8,389.6 640.9,404.7 577.5,446" fill="#fff"/><polygon points="619.2,488.8 683.9,443.3 706.4,462 641.4,509.6" fill="#7e7e7e"/><polygon points="619.2,486.2 683.9,440.7 706.4,459.4 641.4,507" fill="#fff"/><polygon points="686.5,550.9 751.2,499.5 775.7,520 710.8,573.7" fill="#7e7e7e"/><polygon points="686.5,548.3 751.2,496.9 775.7,517.4 710.8,571.1" fill="#fff"/><polygon points="763.9,627.8 831.2,566.4 858.5,589.2 791.4,653.7" fill="#7e7e7e"/><polygon points="763.9,625.2 831.2,563.8 858.5,586.6 791.4,651.1" fill="#fff"/>
<line x1="328" y1="259.5" x2="198.4" y2="315.7" stroke="#7a1616" stroke-width="2"/>
<line x1="328" y1="259.5" x2="270.8" y2="200.9" stroke="#1a1aa0" stroke-width="1.2"/>
<line x1="328" y1="259.5" x2="302.6" y2="131.3" stroke="#2ec42e" stroke-width="1.6"/>
<polygon points="323.9,248 333.9,248 340.9,255 340.9,264.7 333.9,271.7 323.9,271.7 316.9,264.7 316.9,255" fill="#ff00ff"/>
<line x1="326.5" y1="250" x2="328" y2="259.5" stroke="#9a6a9a" stroke-width="1.5"/>
</g>
</svg>
<div class="a" id="panel"></div>
<div class="a" id="ptitle"></div>
<div class="a wb" style="left:1012px;top:86px;width:13px;height:11px"><svg class="a" style="left:2px;top:1px" width="8" height="7"><path d="M1 1l5 5M6 1l-5 5" stroke="#000" stroke-width="1.7"/></svg></div>
<svg class="a" style="left:0;top:80px" width="1036" height="40" viewBox="0 80 1036 40"><text x="823.8" y="95.5" textLength="81.6" lengthAdjust="spacingAndGlyphs" font-size="12" fill="#d8d6d0" font-weight="bold" >オブジェクト管理</text><text x="828.8" y="111" textLength="48.3" lengthAdjust="spacingAndGlyphs" font-size="12" fill="#808080" font-weight="normal" >ファイル(F)</text><rect x="869" y="112" width="5" height="1" fill="#808080"/><text x="891.6" y="111" textLength="38.2" lengthAdjust="spacingAndGlyphs" font-size="12" fill="#808080" font-weight="normal" >編集(E)</text><rect x="919" y="112" width="5" height="1" fill="#808080"/></svg>
<div class="a" id="tree"></div>
<svg class="a" style="left:0;top:100px" width="1036" height="80" viewBox="0 100 1036 80"><rect x="836.5" y="123.5" width="8" height="8" fill="#fff" stroke="#808080"/><path d="M838.5 127.5h4" stroke="#000"/><path d="M845 127.5h15M875.5 134v25.5M876 143.5h18M876 159.5h18" stroke="#808080" stroke-dasharray="1 1"/><path d="M861 121l5 2h3v11l-8-3z" fill="#f8f070" stroke="#605020" stroke-width="0.8"/><path d="M866 123l7-1v11l-4 1z" fill="#d8c030" stroke="#605020" stroke-width="0.8"/><circle cx="883.5" cy="123" r="2.6" fill="#ccc" stroke="#888"/><path d="M883.5 125.5v7M883.5 129h2M883.5 131.5h2" stroke="#888" stroke-width="1.5"/><rect x="894" y="118.6" width="93" height="15.8" fill="#0000f0"/><text x="895" y="131" textLength="91" lengthAdjust="spacingAndGlyphs" font-size="12" fill="#000">object_group@001</text><path d="M902 135.6l8 4v7l-8 4-8-4v-7z" fill="#e02010" stroke="#602010" stroke-width="0.6"/><path d="M894 139.6l8 4 8-4-8-4z" fill="#f8a020"/><path d="M902 143.6v7l8-4v-7z" fill="#b01000"/><circle cx="918.5" cy="139.6" r="2.6" fill="#ccc" stroke="#888"/><path d="M918.5 142.1v7M918.5 145.6h2M918.5 148.1h2" stroke="#888" stroke-width="1.5"/><rect x="929" y="135.0" width="91" height="15.8" fill="#0000f0"/><text x="930" y="147.6" textLength="88" lengthAdjust="spacingAndGlyphs" font-size="12" fill="#000">レンガブロック@002</text><path d="M902 151.3l8 4v7l-8 4-8-4v-7z" fill="#e02010" stroke="#602010" stroke-width="0.6"/><path d="M894 155.3l8 4 8-4-8-4z" fill="#f8a020"/><path d="M902 159.3v7l8-4v-7z" fill="#b01000"/><circle cx="918.5" cy="155.3" r="2.6" fill="#ccc" stroke="#888"/><path d="M918.5 157.8v7M918.5 161.3h2M918.5 163.8h2" stroke="#888" stroke-width="1.5"/><rect x="929" y="150.70000000000002" width="91" height="15.8" fill="#0000f0"/><text x="930" y="163.3" textLength="88" lengthAdjust="spacingAndGlyphs" font-size="12" fill="#000">レンガブロック@001</text></svg>
<div class="a" id="ptool"></div>
<svg class="a" style="left:0;top:580px" width="1036" height="60" viewBox="0 580 1036 60"><circle cx="907.1" cy="614.9" r="10.2" fill="#f7f7f7" stroke="#f5b273" stroke-width="2.7"/><path d="M901.6 610.9h4l1 1.5h6v7h-11z" fill="#e4e4e4" stroke="#a0a0a0" stroke-width="1"/><circle cx="939" cy="614.9" r="10.2" fill="#f7f7f7" stroke="#f5b273" stroke-width="2.7"/><rect x="933.5" y="610.4" width="11" height="9" fill="#c8c8c8" stroke="#a0a0a0"/><path d="M941.5 608.9L936.5 620.9" stroke="#fff" stroke-width="1.6"/><circle cx="971.9" cy="614.9" r="10.2" fill="#f7f7f7" stroke="#f5b273" stroke-width="2.7"/><path d="M963.9 610.9l4-2 4 2v5l-4 2-4-2z" fill="#999"/><path d="M963.9 610.9l4 2 4-2" stroke="#ddd" fill="none"/><path d="M968.9 615.9l4-2 4 2v6l-4 2-4-2z" fill="#888"/><path d="M968.9 615.9l4 2 4-2" stroke="#ddd" fill="none"/><path d="M972.9 607.9a3 3 0 1 1 3 4" stroke="#999" stroke-width="1.6" fill="none"/><circle cx="1002.7" cy="614.9" r="10.2" fill="#f7f7f7" stroke="#f5b273" stroke-width="2.7"/><path d="M998.7 610.9L1006.7 618.9M1006.7 610.9L998.7 618.9" stroke="#8e8e8e" stroke-width="3" stroke-linecap="round"/></svg>
<div class="a" id="status"></div>
<div class="a sb" style="left:4px;top:695px;width:327px;height:18px"></div>
<div class="a sb" style="left:4px;top:717px;width:827px;height:18px"></div>
<svg class="a" style="left:0;top:690px" width="840" height="50" viewBox="0 690 840 50"><text x="7" y="709" textLength="130.7" lengthAdjust="spacingAndGlyphs" font-size="12" fill="#000" font-weight="normal" >拡大/縮小を元に戻しました</text><text x="7" y="730.5" textLength="284.2" lengthAdjust="spacingAndGlyphs" font-size="12" fill="#000" font-weight="normal" >クリックとドラッグをして、オブジェクトを選択し拡大/縮小します。</text></svg>
<svg class="a" style="left:0;top:680px" width="1036" height="60" viewBox="0 680 1036 60"><circle cx="932.2" cy="713.6" r="12.6" fill="#f5f5f5" stroke="#f5b273" stroke-width="3.4"/><circle cx="972.2" cy="713.6" r="12.6" fill="#f5f5f5" stroke="#f5b273" stroke-width="3.4"/><circle cx="1012.2" cy="713.6" r="12.6" fill="#f5f5f5" stroke="#f5b273" stroke-width="3.4"/><text x="925.6" y="721.8" font-size="20" font-weight="bold" fill="#6e6e6e" stroke="#6e6e6e" stroke-width="1" textLength="13.6" lengthAdjust="spacingAndGlyphs">R</text><path d="M968.4 707.2L980.6 714L968.4 720.8z" fill="#7a7a7a"/><rect x="1006.7" y="708.1" width="11" height="11" fill="#6e6e6e"/></svg>
<div class="a" id="bottom"></div>
</body></html>
